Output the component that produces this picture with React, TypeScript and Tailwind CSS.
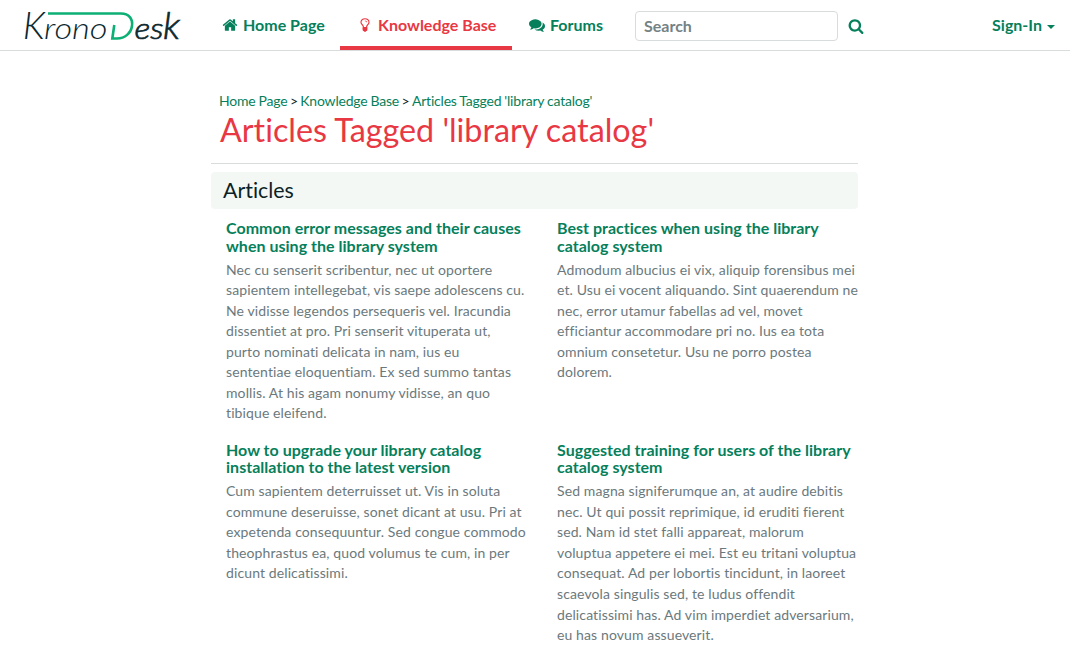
import React from "react";

const articles = [
  {
    title: "Common error messages and their causes\nwhen using the library system",
    text: "Nec cu senserit scribentur, nec ut oportere\nsapientem intellegebat, vis saepe adolescens cu.\nNe vidisse legendos persequeris vel. Iracundia\ndissentiet at pro. Pri senserit vituperata ut,\npurto nominati delicata in nam, ius eu\nsententiae eloquentiam. Ex sed summo tantas\nmollis. At his agam nonumy vidisse, an quo\ntibique eleifend.",
  },
  {
    title: "Best practices when using the library\ncatalog system",
    text: "Admodum albucius ei vix, aliquip forensibus mei\net. Usu ei vocent aliquando. Sint quaerendum ne\nnec, error utamur fabellas ad vel, movet\nefficiantur accommodare pri no. Ius ea tota\nomnium consetetur. Usu ne porro postea\ndolorem.",
  },
  {
    title: "How to upgrade your library catalog\ninstallation to the latest version",
    text: "Cum sapientem deterruisset ut. Vis in soluta\ncommune deseruisse, sonet dicant at usu. Pri at\nexpetenda consequuntur. Sed congue commodo\ntheophrastus ea, quod volumus te cum, in per\ndicunt delicatissimi.",
  },
  {
    title: "Suggested training for users of the library\ncatalog system",
    text: "Sed magna signiferumque an, at audire debitis\nnec. Ut qui possit reprimique, id eruditi fierent\nsed. Nam id stet falli appareat, malorum\nvoluptua appetere ei mei. Est eu tritani voluptua\nconsequat. Ad per lobortis tincidunt, in laoreet\nscaevola singulis sed, te ludus offendit\ndelicatissimi has. Ad vim imperdiet adversarium,\neu has novum assueverit.",
  },
];

const icons = {
  home: "M1472 992v480q0 26-19 45t-45 19h-384v-384h-256v384h-384q-26 0-45-19t-19-45v-480q0-1 .5-3t.5-3l575-474 575 474q1 2 1 6zm223-69l-62 74q-8 9-21 11h-3q-13 0-21-7l-692-577-692 577q-12 8-24 7-13-2-21-11l-62-74q-8-10-7-23.5t11-21.5l719-599q32-26 76-26t76 26l244 204v-195q0-14 9-23t23-9h192q14 0 23 9t9 23v408l219 182q10 8 11 21.5t-7 23.5z",
  comments: "M1408 768q0 139-94 257t-256.5 186.5-353.5 68.5q-86 0-176-16-124 88-278 128-36 9-86 16h-3q-11 0-20.5-8t-11.5-21q-1-3-1-6.5t.5-6.5 2-6l2.5-5 3.5-5.5 4-5 4.5-5 4-4.5q5-6 23-25t26-29.5 22.5-29 25-38.5 20.5-44q-124-72-195-177t-71-224q0-139 94-257t256.5-186.5 353.5-68.5 353.5 68.5 256.5 186.5 94 257zm384 256q0 120-71 224.5t-195 176.5q10 24 20.5 44t25 38.5 22.5 29 26 29.5 23 25q1 1 4 4.5t4.5 5 4 5 3.5 5.5l2.5 5 2 6 .5 6.5-1 6.5q-3 14-13 22t-22 7q-50-7-86-16-154-40-278-128-90 16-176 16-271 0-472-132 58 4 88 4 161 0 309-45t264-129q125-92 192-212t67-254q0-77-23-152 129 71 204 178t75 230z",
  search: "M1216 832q0-185-131.5-316.5t-316.5-131.5-316.5 131.5-131.5 316.5 131.5 316.5 316.5 131.5 316.5-131.5 131.5-316.5zm512 832q0 52-38 90t-90 38q-54 0-90-38l-343-342q-179 124-399 124-143 0-273.5-55.5t-225-150-150-225-55.5-273.5 55.5-273.5 150-225 225-150 273.5-55.5 273.5 55.5 225 150 150 225 55.5 273.5q0 220-124 399l343 343q37 37 37 90z",
  bulb: "M1120 576q0 13-9.5 22.5t-22.5 9.5-22.5-9.5-9.5-22.5q0-46-54-71t-106-25q-13 0-22.5-9.5t-9.5-22.5 9.5-22.5 22.5-9.5q50 0 99.5 16t87 54 37.5 90zm160 0q0-72-34.5-134t-90-101.5-123-62-136.5-22.5-136.5 22.5-123 62-90 101.5-34.5 134q0 101 68 180 10 11 30.5 33t30.5 33q128 153 141 298h228q13-145 141-298 10-11 30.5-33t30.5-33q68-79 68-180zm128 0q0 155-103 268-45 49-74.5 87t-59.5 95.5-34 107.5q47 28 47 82 0 37-25 64 25 27 25 64 0 52-45 81 13 23 13 47 0 46-31.5 71t-77.5 25q-20 44-60 70t-87 26-87-26-60-70q-46 0-77.5-25t-31.5-71q0-24 13-47-45-29-45-81 0-37 25-64-25-27-25-64 0-54 47-82-4-50-34-107.5t-59.5-95.5-74.5-87q-103-113-103-268 0-99 44.5-184.5t117-142 164-89 186.5-32.5 186.5 32.5 164 89 117 142 44.5 184.5z",
};

function Icon({ name, className }: { name: keyof typeof icons; className: string }) {
  return (
    <svg viewBox="0 0 1792 1792" fill="currentColor" className={className}>
      <path d={icons[name]} />
    </svg>
  );
}

function Logo() {
  return (
    <svg width="180" height="50" viewBox="0 0 180 50" className="overflow-visible font-['Lato']" aria-label="KronoDesk">
      <g fill="#0b2830" fontStyle="italic" fontWeight="300">
        <text x="2.8" y="39" fontSize="37" textLength="22" lengthAdjust="spacingAndGlyphs">K</text>
        <text x="24" y="39.3" fontSize="29.5" textLength="63.5" lengthAdjust="spacingAndGlyphs">rono</text>
        <g stroke="#0b2830" strokeWidth="0.7">
          <text x="114.5" y="39" fontSize="29" textLength="29" lengthAdjust="spacingAndGlyphs">es</text>
          <text x="143" y="39" fontSize="38" textLength="17" lengthAdjust="spacingAndGlyphs">k</text>
        </g>
      </g>
      <path d="M28 13.5H101C109 13.5 113 19 112 26C111 33 105 38.5 97 38.5H92.3L94.3 25" fill="none" stroke="#0caf74" strokeWidth="2.6" />
    </svg>
  );
}

export default function App() {
  return (
    <div className="h-[647px] w-[1070px] overflow-hidden bg-white font-['Lato',sans-serif] text-[14.4px] leading-[20.57px] text-[#0b1f26] [font-variant-ligatures:none]">
      <header className="flex h-[51px] items-start border-b border-[#d9dcdc] pl-5 text-base font-bold text-[#067f5b]">
        <div className="w-[188px]">
          <Logo />
        </div>
        <nav className="flex h-[50px]">
          <a className="flex w-[132px] items-center pl-[14px]">
            <Icon name="home" className="mr-[5px] size-4" />
            Home Page
          </a>
          <a className="flex w-[172px] items-center border-b-4 border-[#e83843] pl-[17px] pt-1 text-[#e83843]">
            <Icon name="bulb" className="mr-[5px] size-4" />
            Knowledge Base
          </a>
          <a className="flex w-[123px] items-center pl-[17px]">
            <Icon name="comments" className="mr-[5px] size-4" />
            Forums
          </a>
        </nav>
        <div className="mt-[11px] flex h-[30px] w-[203px] items-center rounded border border-[#d9dcdc] px-2 text-[#748285]">
          Search
        </div>
        <Icon name="search" className="ml-[10px] mt-[18px] size-4" />
        <div className="ml-auto mr-[15px] flex h-[50px] items-center">
          Sign-In
          <span className="ml-[5px] mt-[3px] border-x-4 border-t-4 border-x-transparent border-t-[#067f5b]" />
        </div>
      </header>
      <main className="ml-[211px] w-[647px] pt-10">
        <div className="pl-2 text-[14px] tracking-[-0.2px] [word-spacing:-0.4px] text-[#067f5b]">
          Home Page<span className="text-[#0b1f26] [word-spacing:-0.9px]"> &gt; </span>Knowledge Base<span className="text-[#0b1f26] [word-spacing:-0.9px]"> &gt; </span>Articles Tagged 'library catalog'
        </div>
        <h1 className="h-[52px] border-b border-[#d9dcdc] pl-[9px] text-[32.3px] leading-[36px] text-[#e83843]">Articles Tagged 'library catalog'</h1>
        <h2 className="mt-2 h-[37px] rounded bg-[#f3f8f5] pl-3 text-[21.4px] leading-[37px]">Articles</h2>
        <div className="grid grid-cols-[301px_301px] gap-x-[30px] pl-[15px] pt-[10.4px]">
          {articles.map((a) => (
            <article key={a.title} className="mb-[16.6px] whitespace-pre">
              <h3 className="mb-[5.4px] text-base leading-[17.6px] font-bold tracking-[0.02px] text-[#067f5b]">{a.title}</h3>
              <p className="text-[14px] tracking-[0.11px] text-[#6b797d]">{a.text}</p>
            </article>
          ))}
        </div>
      </main>
    </div>
  );
}
